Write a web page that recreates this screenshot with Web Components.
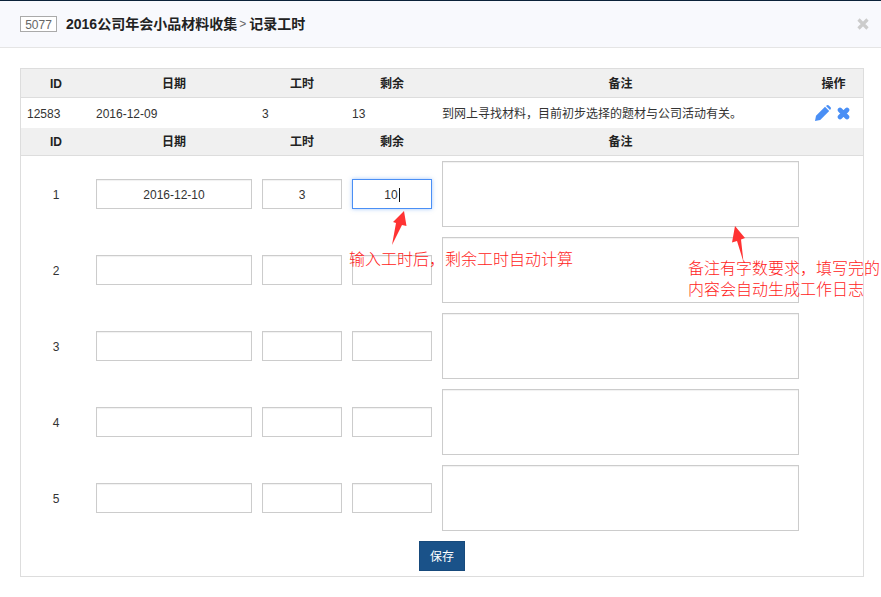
<!DOCTYPE html>
<html lang="zh">
<head>
<meta charset="utf-8">
<title>记录工时</title>
<style>
    html, body { margin: 0; padding: 0; background: #fff; }
    body {
        font: 12px/1.2 "Liberation Sans", "Noto Sans CJK SC", sans-serif;
        color: #333;
        --col-widths: 70px 166px 90px 90px 367px 1fr;
    }
</style>
</head>
<body>
<modal-dialog code="5077" project="2016公司年会小品材料收集" action="记录工时">
    <work-panel>
        <table-head></table-head>
        <log-row log-id="12583" date="2016-12-09" hours="3" left="13" note="到网上寻找材料，目前初步选择的题材与公司活动有关。"></log-row>
        <table-head short></table-head>
        <entry-row num="1" date="2016-12-10" hours="3" left="10" focused></entry-row>
        <entry-row num="2"></entry-row>
        <entry-row num="3"></entry-row>
        <entry-row num="4"></entry-row>
        <entry-row num="5"></entry-row>
        <save-button>保存</save-button>
    </work-panel>
</modal-dialog>

<call-out x="349" y="248" w="240">输入工时后，剩余工时自动计算</call-out>
<call-out x="688" y="257" w="193">备注有字数要求，填写完的<br>内容会自动生成工作日志</call-out>
<red-arrow points="404,211 406.5,226 402,225 392,245 396,223 393,222"></red-arrow>
<red-arrow points="735,226 745,238 741,239.5 743.5,262 737,241 732,242.5"></red-arrow>

<script>
class ModalDialog extends HTMLElement {
    constructor() {
        super();
        this.attachShadow({ mode: 'open' }).innerHTML = `
            <style>
                :host { display: block; border-top: 1px solid #0b2239; }
                header {
                    display: flex;
                    align-items: center;
                    height: 46px;
                    padding: 0 12px 0 20px;
                    background: #f8f9fd;
                    border-bottom: 1px solid #e5e5e5;
                    font-size: 14px;
                    color: #222;
                }
                .code {
                    box-sizing: border-box;
                    width: 37px;
                    height: 16px;
                    margin-right: 9px;
                    border: 1px solid #aaa;
                    background: #fff;
                    color: #666;
                    font-size: 12px;
                    line-height: 16px;
                    text-align: center;
                }
                .sep { margin: 0 3px 0 2px; font-weight: normal; font-size: 12px; color: #666; }
                b { font-weight: bold; }
                svg { margin-left: auto; display: block; }
                .content { padding: 20px 17px 0 20px; }
            </style>
            <header>
                <span class="code">${this.getAttribute('code')}</span>
                <b>${this.getAttribute('project')}</b>
                <span class="sep">&gt;</span>
                <b>${this.getAttribute('action')}</b>
                <svg width="12" height="12" viewBox="0 0 12 12"><path d="M1.5 1.5 10.5 10.5M10.5 1.5 1.5 10.5" stroke="#ccc" stroke-width="3.2"/></svg>
            </header>
            <div class="content"><slot></slot></div>
        `;
    }
}

class WorkPanel extends HTMLElement {
    constructor() {
        super();
        this.attachShadow({ mode: 'open' }).innerHTML = `
            <style>
                :host { display: block; border: 1px solid #ddd; background: #fff; }
            </style>
            <slot></slot>
        `;
    }
}

class TableHead extends HTMLElement {
    constructor() {
        super();
        const labels = ['ID', '日期', '工时', '剩余', '备注'];
        if (!this.hasAttribute('short')) labels.push('操作');
        this.attachShadow({ mode: 'open' }).innerHTML = `
            <style>
                :host {
                    display: grid;
                    grid-template-columns: var(--col-widths);
                    align-items: center;
                    box-sizing: border-box;
                    height: 29px;
                    padding-top: 2px;
                    background: #f0f0f0;
                    border-bottom: 1px solid #ddd;
                    font-weight: bold;
                    color: #222;
                    text-align: center;
                }
                :host([short]) { height: 28px; }
            </style>
            ${labels.map(label => `<div>${label}</div>`).join('')}
        `;
    }
}

class LogRow extends HTMLElement {
    constructor() {
        super();
        const attr = name => this.getAttribute(name);
        this.attachShadow({ mode: 'open' }).innerHTML = `
            <style>
                :host {
                    display: grid;
                    grid-template-columns: var(--col-widths);
                    align-items: center;
                    box-sizing: border-box;
                    height: 30px;
                    padding-top: 2px;
                    color: #333;
                }
                div { padding-left: 5px; }
                .id { padding-left: 6px; }
                .ops { display: flex; gap: 6px; padding-left: 11px; margin-top: -2px; align-items: center; }
                svg { display: block; }
            </style>
            <div class="id">${attr('log-id')}</div>
            <div>${attr('date')}</div>
            <div>${attr('hours')}</div>
            <div>${attr('left')}</div>
            <div>${attr('note')}</div>
            <div class="ops">
                <svg width="16" height="16" viewBox="0 0 16 16"><path fill="#4a8ff5" d="M10 1.8 14.2 6 5.2 15 0 16 1 10.8ZM11 1 12 .3Q13-.2 13.8.4L15.6 2.2Q16.2 3 15.7 4L15 5Z"/></svg>
                <svg width="13" height="13" viewBox="0 0 13 13"><path d="M3 3 10 10M10 3 3 10" stroke="#4a8ff5" stroke-width="4.6" stroke-linecap="round"/></svg>
            </div>
        `;
    }
}

class EntryRow extends HTMLElement {
    constructor() {
        super();
        const val = name => this.getAttribute(name) || '';
        this.attachShadow({ mode: 'open' }).innerHTML = `
            <style>
                :host {
                    display: grid;
                    grid-template-columns: var(--col-widths);
                    align-items: center;
                    height: 76px;
                    color: #333;
                }
                .num { padding-top: 2px; text-align: center; }
                field-box, note-box { margin: 0 5px; }
            </style>
            <div class="num">${val('num')}</div>
            <field-box>${val('date')}</field-box>
            <field-box>${val('hours')}</field-box>
            <field-box ${this.hasAttribute('focused') ? 'focused' : ''}>${val('left')}</field-box>
            <note-box></note-box>
        `;
    }
}

class FieldBox extends HTMLElement {
    constructor() {
        super();
        this.attachShadow({ mode: 'open' }).innerHTML = `
            <style>
                :host {
                    display: flex;
                    justify-content: center;
                    align-items: center;
                    box-sizing: border-box;
                    height: 30px;
                    padding-top: 2px;
                    border: 1px solid #ccc;
                    box-shadow: inset 0 1px 1px rgba(0, 0, 0, .06);
                    color: #333;
                    background: #fff;
                }
                :host([focused]) {
                    border-color: #4a8ff5;
                    box-shadow: 0 0 4px rgba(74, 143, 245, .5);
                }
                .caret { display: none; width: 1px; height: 14px; margin-left: 1px; background: #111; }
                :host([focused]) .caret { display: block; }
            </style>
            <slot></slot><span class="caret"></span>
        `;
    }
}

class NoteBox extends HTMLElement {
    constructor() {
        super();
        this.attachShadow({ mode: 'open' }).innerHTML = `
            <style>
                :host {
                    display: block;
                    box-sizing: border-box;
                    height: 66px;
                    border: 1px solid #ccc;
                    box-shadow: inset 0 1px 1px rgba(0, 0, 0, .06);
                    background: #fff;
                }
            </style>
        `;
    }
}

class SaveButton extends HTMLElement {
    constructor() {
        super();
        this.attachShadow({ mode: 'open' }).innerHTML = `
            <style>
                :host {
                    display: block;
                    box-sizing: border-box;
                    width: 46px;
                    height: 30px;
                    margin: 5px auto 5px;
                    border: 1px solid #174a7c;
                    background: #1a5289;
                    color: #fff;
                    line-height: 30px;
                    text-align: center;
                }
            </style>
            <slot></slot>
        `;
    }
}

// the red notes sit on top of the form, so these two are placed on the page
class CallOut extends HTMLElement {
    constructor() {
        super();
        const x = this.getAttribute('x'), y = this.getAttribute('y'), w = this.getAttribute('w');
        this.attachShadow({ mode: 'open' }).innerHTML = `
            <style>
                :host {
                    position: absolute;
                    left: ${x}px;
                    top: ${y}px;
                    width: ${w}px;
                    font: 300 16px/21px "Noto Sans CJK SC", sans-serif;
                    color: #ff2222;
                    white-space: nowrap;
                }
            </style>
            <slot></slot>
        `;
    }
}

class RedArrow extends HTMLElement {
    constructor() {
        super();
        this.attachShadow({ mode: 'open' }).innerHTML = `
            <style>
                :host { position: absolute; left: 0; top: 0; }
                svg { display: block; }
            </style>
            <svg width="881" height="597" viewBox="0 0 881 597"><polygon fill="#ff3333" points="${this.getAttribute('points')}"/></svg>
        `;
    }
}

window.customElements.define('modal-dialog', ModalDialog);
window.customElements.define('work-panel', WorkPanel);
window.customElements.define('table-head', TableHead);
window.customElements.define('log-row', LogRow);
window.customElements.define('entry-row', EntryRow);
window.customElements.define('field-box', FieldBox);
window.customElements.define('note-box', NoteBox);
window.customElements.define('save-button', SaveButton);
window.customElements.define('call-out', CallOut);
window.customElements.define('red-arrow', RedArrow);
</script>
</body>
</html>
